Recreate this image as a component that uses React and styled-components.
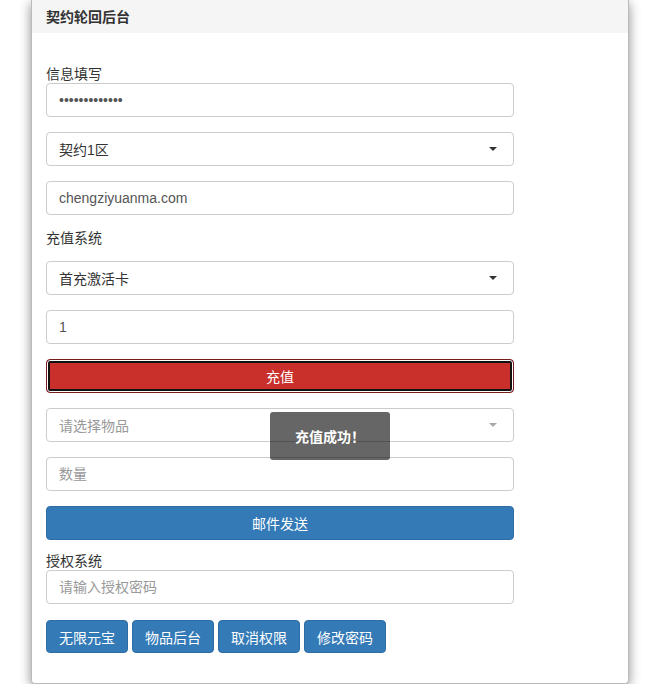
import React from 'react'
import styled, { createGlobalStyle } from 'styled-components'

const GlobalStyle = createGlobalStyle`
  html, body {
    margin: 0;
    padding: 0;
    background: #fff;
  }
  body {
    font-family: "Liberation Sans", "Noto Sans CJK SC", sans-serif;
    font-size: 14px;
    color: #333;
  }
  * {
    box-sizing: border-box;
  }
`

const Panel = styled.div`
  width: 598px;
  margin-left: 31px;
  background: #fff;
  border: 1px solid #bbb;
  border-top: none;
  border-radius: 0 0 4px 4px;
  box-shadow: 0 3px 12px rgba(0, 0, 0, 0.45);
`

const Heading = styled.div`
  height: 33px;
  padding: 0 14px 2px;
  display: flex;
  align-items: center;
  background: #f5f5f5;
  font-weight: bold;
  font-size: 14px;
  color: #333;
`

const Body = styled.div`
  padding: 33px 114px 30px 14px;
  display: flex;
  flex-direction: column;
`

const Label = styled.div`
  line-height: 17px;
  margin-top: ${(p) => p.$top || 0}px;
  margin-bottom: ${(p) => p.$bottom || 0}px;
  color: #333;
`

const Input = styled.input`
  display: block;
  width: 100%;
  height: 34px;
  margin-bottom: ${(p) => (p.$last ? 0 : 15)}px;
  padding: 6px 12px;
  font-family: inherit;
  font-size: 14px;
  color: #555;
  background: #fff;
  border: 1px solid #ccc;
  border-radius: 4px;
  outline: none;
  &::placeholder {
    color: #999;
  }
  &[type='password'] {
    font-size: 14px;
  }
`

const SelectBox = styled.div`
  height: 34px;
  margin-bottom: 15px;
  padding: 0 12px;
  display: flex;
  align-items: center;
  justify-content: space-between;
  border: 1px solid #ccc;
  border-radius: 4px;
  background: #fff;
  color: ${(p) => (p.$placeholder ? '#999' : '#333')};
`

const Caret = styled.span`
  width: 0;
  height: 0;
  margin-right: 4px;
  border-left: 4px solid transparent;
  border-right: 4px solid transparent;
  border-top: 4px solid ${(p) => (p.$light ? '#aaa' : '#333')};
`

const WideButton = styled.button`
  display: block;
  width: 100%;
  height: 34px;
  margin-bottom: 15px;
  font-family: inherit;
  font-size: 14px;
  color: #fff;
  border-radius: 4px;
  cursor: pointer;
  background: ${(p) => (p.$danger ? '#c9302c' : '#337ab7')};
  border: 1px solid ${(p) => (p.$danger ? '#761c19' : '#2e6da4')};
  box-shadow: ${(p) =>
    p.$danger ? 'inset 0 0 0 1px #fff, inset 0 0 0 3px #111' : 'none'};
  outline: none;
`

const ButtonRow = styled.div`
  display: flex;
  gap: 4px;
  margin-top: 16px;
`

const SmallButton = styled.button`
  height: 33px;
  padding: 0 12px;
  font-family: inherit;
  font-size: 14px;
  color: #fff;
  background: #337ab7;
  border: 1px solid #2e6da4;
  border-radius: 4px;
  cursor: pointer;
`

const Toast = styled.div`
  position: absolute;
  left: 270px;
  top: 412px;
  width: 120px;
  height: 48px;
  display: flex;
  align-items: center;
  justify-content: center;
  background: rgba(0, 0, 0, 0.6);
  border-radius: 3px;
  color: #fff;
  font-weight: bold;
  font-size: 14px;
`

export default function App() {
  return (
    <>
      <GlobalStyle />
      <Panel>
        <Heading>契约轮回后台</Heading>
        <Body>
          <Label>信息填写</Label>
          <Input type="password" defaultValue="1234567890123" readOnly />
          <SelectBox>
            <span>契约1区</span>
            <Caret />
          </SelectBox>
          <Input type="text" defaultValue="chengziyuanma.com" readOnly />
          <Label $bottom={14}>充值系统</Label>
          <SelectBox>
            <span>首充激活卡</span>
            <Caret />
          </SelectBox>
          <Input type="text" defaultValue="1" readOnly />
          <WideButton $danger>充值</WideButton>
          <SelectBox $placeholder>
            <span>请选择物品</span>
            <Caret $light />
          </SelectBox>
          <Input type="text" placeholder="数量" />
          <WideButton>邮件发送</WideButton>
          <Label $top={-2}>授权系统</Label>
          <Input type="text" placeholder="请输入授权密码" $last />
          <ButtonRow>
            <SmallButton>无限元宝</SmallButton>
            <SmallButton>物品后台</SmallButton>
            <SmallButton>取消权限</SmallButton>
            <SmallButton>修改密码</SmallButton>
          </ButtonRow>
        </Body>
      </Panel>
      <Toast>充值成功！</Toast>
    </>
  )
}
